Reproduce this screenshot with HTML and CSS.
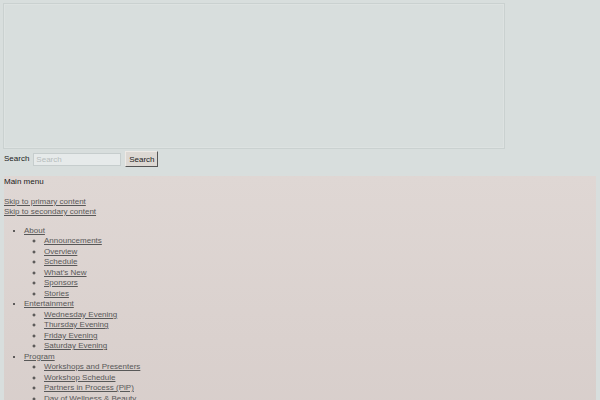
FILE: index.html
```html
<!DOCTYPE html>
<html>
<head>
<meta charset="utf-8">
<link rel="stylesheet" href="styles.css">
</head>
<body>
<div class="frame"></div>
<form class="search">
  <label class="search-label">Search</label>
  <input class="search-input" type="text" placeholder="Search">
  <button class="search-btn" type="button">Search</button>
</form>
<nav class="menu">
  <h3 class="menu-title">Main menu</h3>
  <div class="skip"><a href="#">Skip to primary content</a></div>
  <div class="skip"><a href="#">Skip to secondary content</a></div>
  <ul class="top">
    <li><a href="#">About</a>
      <ul class="sub">
        <li><a href="#">Announcements</a></li>
        <li><a href="#">Overview</a></li>
        <li><a href="#">Schedule</a></li>
        <li><a href="#">What’s New</a></li>
        <li><a href="#">Sponsors</a></li>
        <li><a href="#">Stories</a></li>
      </ul>
    </li>
    <li><a href="#">Entertainment</a>
      <ul class="sub">
        <li><a href="#">Wednesday Evening</a></li>
        <li><a href="#">Thursday Evening</a></li>
        <li><a href="#">Friday Evening</a></li>
        <li><a href="#">Saturday Evening</a></li>
      </ul>
    </li>
    <li><a href="#">Program</a>
      <ul class="sub">
        <li><a href="#">Workshops and Presenters</a></li>
        <li><a href="#">Workshop Schedule</a></li>
        <li><a href="#">Partners in Process (PiP)</a></li>
        <li><a href="#">Day of Wellness &amp; Beauty</a></li>
      </ul>
    </li>
  </ul>
</nav>
</body>
</html>
```

FILE: styles.css
```css
html, body {
  margin: 0;
  padding: 0;
  background: #d8dedd;
  font-family: "Liberation Sans", Arial, sans-serif;
  font-size: 8px;
  line-height: 10.5px;
  color: #1e1e1e;
}

.frame {
  margin: 3px 0 0 3px;
  width: 500px;
  height: 144px;
  border: 1px solid #cad1d0;
  box-shadow: inset 0 0 0 1px #dde2e1;
}

.search {
  display: flex;
  align-items: center;
  margin: 2px 0 0 4px;
  height: 16px;
}

.search-label {
  color: #222;
  font-size: 8px;
}

.search-input {
  margin: 0 0 0 4px;
  width: 88px;
  height: 13px;
  box-sizing: border-box;
  padding: 0 2px;
  border: 1px solid #c6cdcd;
  background: #e6eaea;
  font-family: "Liberation Sans", Arial, sans-serif;
  font-size: 8px;
  color: #333;
}

.search-input::placeholder {
  color: #b7bdbd;
}

.search-btn {
  margin: 0 0 0 4px;
  width: 33px;
  height: 16px;
  box-sizing: border-box;
  padding: 0;
  border: 1px solid;
  border-color: #eeeae6 #555 #555 #eeeae6;
  background: #ddd8d3;
  font-family: "Liberation Sans", Arial, sans-serif;
  font-size: 8px;
  color: #222;
}

.menu {
  margin: 9px 4px 0 4px;
  padding: 1px 0 20px 0;
  background: linear-gradient(#dfd7d4, #d6ccc9 300px);
  min-height: 240px;
}

.menu-title {
  margin: 0;
  font-size: 8px;
  font-weight: normal;
  color: #1a1a1a;
}

.skip {
  line-height: 10px;
}

.menu-title + .skip {
  margin-top: 9.6px;
}

.menu a {
  color: #585858;
  text-decoration: underline;
}

.top {
  margin: 8.5px 0 0 0;
  padding-left: 20px;
  list-style: disc;
}

.sub {
  margin: 0;
  padding-left: 20px;
  list-style: circle;
}

.top li::marker {
  color: #333;
}
```
